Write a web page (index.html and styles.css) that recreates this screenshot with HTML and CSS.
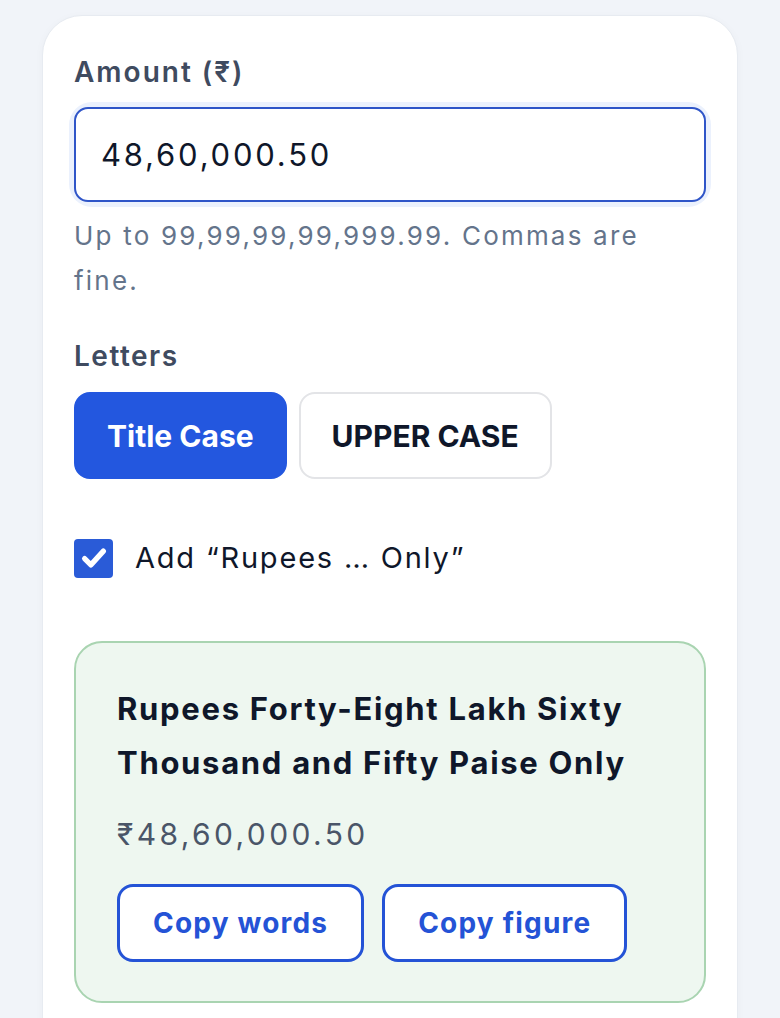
FILE: index.html
```html
<!DOCTYPE html>
<html lang="en">
<head>
<meta charset="utf-8">
<title>Amount in Words</title>
<link rel="stylesheet" href="styles.css">
</head>
<body>
<main class="page">
  <section class="card">
    <label class="field-label" for="amount">Amount (₹)</label>
    <div class="input-wrap">
      <input id="amount" class="amount-input" type="text" value="48,60,000.50">
    </div>
    <p class="help">Up to 99,99,99,99,999.99. Commas are fine.</p>

    <div class="field-label letters-label">Letters</div>
    <div class="seg">
      <button class="seg-btn active" type="button">Title Case</button>
      <button class="seg-btn" type="button">UPPER CASE</button>
    </div>

    <label class="check-row">
      <span class="checkbox">
        <svg viewBox="0 0 24 24" width="30" height="30" aria-hidden="true"><path d="M4.5 12.5l5 5L19.5 6.5" fill="none" stroke="#fff" stroke-width="4.2" stroke-linecap="round" stroke-linejoin="round"/></svg>
      </span>
      <span class="check-text">Add “Rupees … Only”</span>
    </label>

    <div class="result">
      <div class="words">Rupees Forty-Eight Lakh Sixty Thousand and Fifty Paise Only</div>
      <div class="figure">₹48,60,000.50</div>
      <div class="actions">
        <button class="copy-btn" type="button">Copy words</button>
        <button class="copy-btn" type="button">Copy figure</button>
      </div>
    </div>
  </section>
</main>
</body>
</html>
```

FILE: styles.css
```css
* { box-sizing: border-box; }

html, body {
  margin: 0;
  padding: 0;
  background: #f1f4f9;
  font-family: "Inter", "Noto Sans", "DejaVu Sans", sans-serif;
  color: #0f172a;
  overflow: hidden;
}

.page {
  padding: 15px 42px 0 42px;
}

.card {
  background: #ffffff;
  border: 1px solid #e7ebf1;
  border-radius: 40px;
  box-shadow: 0 2px 10px rgba(15, 23, 42, 0.03);
  padding: 39px 31px 60px 31px;
  min-height: 1100px;
}

.field-label {
  display: block;
  font-size: 28px;
  font-weight: 600;
  line-height: 34px;
  letter-spacing: 2px;
  color: #3f4b60;
  margin-bottom: 18px;
}

.input-wrap {
  border-radius: 18px;
  box-shadow: 0 0 0 5px #ebf1fd;
}

.amount-input {
  display: block;
  width: 100%;
  height: 95px;
  border: 2px solid #2f55c8;
  border-radius: 14px;
  padding: 0 25px;
  font-family: inherit;
  font-size: 31px;
  letter-spacing: 2.8px;
  color: #0f172a;
  background: #fff;
  outline: none;
}

.help {
  margin: 11px 0 0 0;
  max-width: 600px;
  font-size: 26px;
  line-height: 45px;
  letter-spacing: 2.2px;
  color: #64748b;
}

.letters-label {
  margin-top: 36px;
  margin-bottom: 19px;
  letter-spacing: 1.5px;
}

.seg {
  display: flex;
  gap: 12px;
}

.seg-btn {
  height: 87px;
  padding: 0 31px;
  border-radius: 16px;
  border: 2px solid #e3e4e7;
  background: #fff;
  font-family: inherit;
  font-size: 30px;
  font-weight: 700;
  color: #0f172a;
}

.seg-btn.active {
  background: #2357df;
  border-color: #2357df;
  color: #fff;
}

.check-row {
  display: flex;
  align-items: center;
  gap: 22px;
  margin-top: 59px;
}

.checkbox {
  width: 39px;
  height: 39px;
  border-radius: 4px;
  background: #2a5bd7;
  display: flex;
  align-items: center;
  justify-content: center;
}

.check-text {
  font-size: 29px;
  line-height: 40px;
  letter-spacing: 1.8px;
  color: #0f172a;
}

.result {
  margin-top: 63px;
  background: #eef7f0;
  border: 2px solid #a9d4b1;
  border-radius: 28px;
  padding: 39px 41px 39px 41px;
}

.words {
  font-size: 31px;
  font-weight: 700;
  line-height: 54px;
  letter-spacing: 1.7px;
  color: #0f172a;
}

.figure {
  margin-top: 22px;
  font-size: 30px;
  line-height: 44px;
  letter-spacing: 3.4px;
  color: #4a5568;
}

.actions {
  display: flex;
  gap: 18px;
  margin-top: 28px;
}

.copy-btn {
  height: 78px;
  padding: 0 33px;
  border: 3px solid #2453d6;
  border-radius: 16px;
  background: #fff;
  font-family: inherit;
  font-size: 28px;
  font-weight: 700;
  letter-spacing: 1.2px;
  color: #2453d6;
}
```
